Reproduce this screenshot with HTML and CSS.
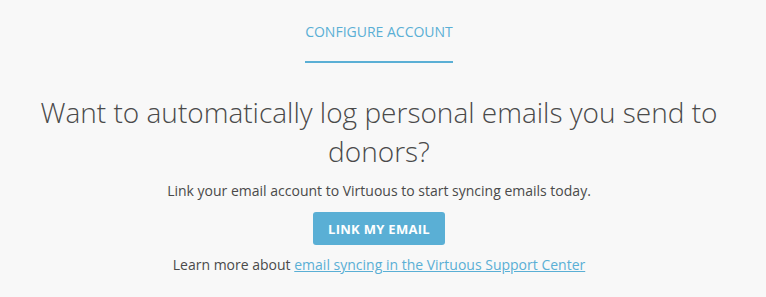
FILE: index.html
```html
<!DOCTYPE html>
<html lang="en">

<head>
  <meta charset="UTF-8" />
  <title>Configure account</title>
  <link rel="stylesheet" href="styles.css">
</head>

<body>
  <main class="setup">
    <nav class="tabs">
      <a class="tab active" href="#">CONFIGURE ACCOUNT</a>
    </nav>
    <h1 class="headline">Want to automatically log personal emails you send to donors?</h1>
    <p class="lead">Link your email account to Virtuous to start syncing emails today.</p>
    <button class="primary">LINK MY EMAIL</button>
    <p class="more">Learn more about <a href="#">email syncing in the Virtuous Support Center</a></p>
  </main>
</body>

</html>
```

FILE: styles.css
```css
:root {
  /* colors */
  --color-bg: #f8f8f8;
  --color-text: #4a4a4a;
  --color-accent: #5aafd5;
}

body {
  margin: 0;
  background-color: var(--color-bg);
  color: var(--color-text);
  font-family: "Open Sans", "Noto Sans", sans-serif;
}

.setup {
  display: flex;
  flex-direction: column;
  align-items: center;
  padding: 22px 8px 0 0;
}

/* tabs */
.tabs {
  display: flex;
}

.tab {
  color: var(--color-accent);
  text-decoration: none;
  font-size: 14px;
  line-height: 20px;
  padding-bottom: 19px;
  border-bottom: 2px solid var(--color-accent);
}

.headline {
  font-size: 28px;
  font-weight: 300;
  line-height: 39px;
  width: 700px;
  text-align: center;
  margin: 30px 0 0;
}

.lead {
  font-size: 14px;
  margin: 10px 0 0;
  line-height: 20px;
}

button.primary {
  margin-top: 11px;
  width: 132px;
  height: 33px;
  border: 0;
  border-radius: 3px;
  background-color: var(--color-accent);
  color: #fff;
  font-family: inherit;
  font-size: 13px;
  font-weight: 700;
  letter-spacing: 0.3px;
  cursor: pointer;
}

.more {
  font-size: 14px;
  line-height: 20px;
  margin: 10px 0 0;
}

.more a {
  color: var(--color-accent);
}
```
